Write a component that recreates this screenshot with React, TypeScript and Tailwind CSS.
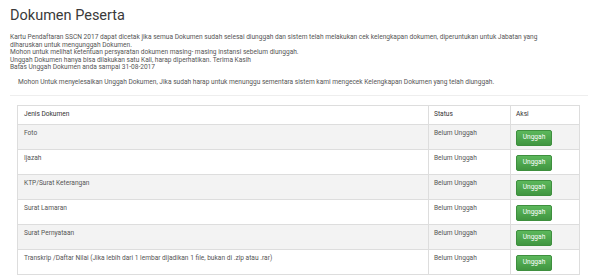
const dokumen = [
  'Foto',
  'Ijazah',
  'KTP/Surat Keterangan',
  'Surat Lamaran',
  'Surat Pernyataan',
  'Transkrip /Daftar Nilai (Jika lebih dari 1 lembar dijadikan 1 file, bukan di .zip atau .rar)',
]

export default function App() {
  return (
    <div className="w-[600px] h-[279px] overflow-hidden bg-white font-['Roboto',sans-serif] text-[#555]">
      <div className="px-[10px] pt-[7px]">
        <h1 className="text-[14.5px] leading-[18px] font-normal text-[#3a3a3a]">Dokumen Peserta</h1>

        <div className="mt-[9px] text-[6.6px] leading-[7.5px] pr-[20px]">
          <p>
            Kartu Pendaftaran SSCN 2017 dapat dicetak jika semua Dokumen sudah selesai diunggah dan sistem telah melakukan cek kelengkapan dokumen, diperuntukan untuk Jabatan yang diharuskan untuk mengunggah Dokumen.
          </p>
          <p>Mohon untuk melihat ketentuan persyaratan dokumen masing- masing instansi sebelum diunggah.</p>
          <p>Unggah Dokumen hanya bisa dilakukan satu Kali, harap diperhatikan. Terima Kasih</p>
          <p>Batas Unggah Dokumen anda sampai 31-08-2017</p>
        </div>

        <div className="mt-[7px] border-b border-[#eee] pl-[8px] pb-[9px] w-[578px] text-[6.6px] leading-[7.5px]">
          Mohon Untuk menyelesaikan Unggah Dokumen, Jika sudah harap untuk menunggu sementara sistem kami mengecek Kelengkapan Dokumen yang telah diunggah.
        </div>

        <table className="mt-[9px] ml-[7px] w-[563px] border-collapse border border-[#ddd] text-[6.6px] leading-[7.5px]">
          <thead>
            <tr className="h-[19px]">
              <th className="w-[411px] border border-[#ddd] px-[6px] text-left font-normal text-[#333]">Jenis Dokumen</th>
              <th className="w-[82px] border border-[#ddd] px-[5px] text-left font-normal text-[#333]">Status</th>
              <th className="border border-[#ddd] px-[5px] text-left font-normal text-[#333]">Aksi</th>
            </tr>
          </thead>
          <tbody>
            {dokumen.map((d, i) => (
              <tr key={d} className={i % 2 === 0 ? 'bg-[#f3f3f3]' : 'bg-white'}>
                <td className="border-t border-[#ddd] px-[6px] pt-[5px] pb-[3px] align-top">{d}</td>
                <td className="border border-[#ddd] px-[5px] pt-[5px] pb-[3px] align-top">Belum Unggah</td>
                <td className="border-t border-[#ddd] px-[5px] pt-[5px] pb-[3px] align-top">
                  <button className="block h-[16px] w-[36px] rounded-[2px] border border-[#3e8f3e] bg-gradient-to-b from-[#5cb85c] to-[#419641] text-[6.6px] text-white">
                    Unggah
                  </button>
                </td>
              </tr>
            ))}
          </tbody>
        </table>
      </div>
    </div>
  )
}
